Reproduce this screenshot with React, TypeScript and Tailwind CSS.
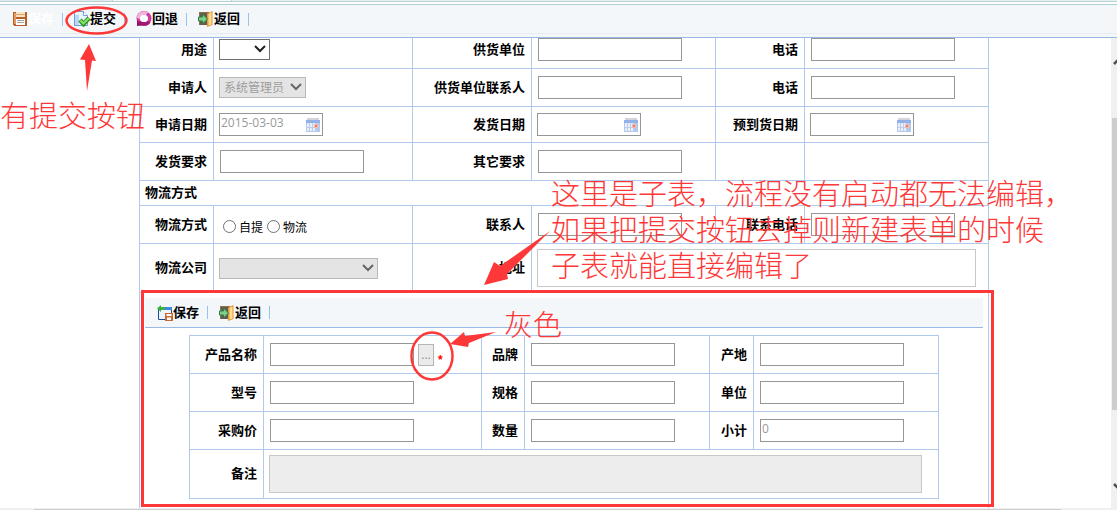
import type { ReactNode } from "react";
import clsx from "clsx";

// Purchase request form: outer request sheet, product sub-table below it,
// and the red review notes drawn over both.

const cellLine = "border-r border-b border-[#b1caeb]";
const boxStyle = "block border border-[#969696] bg-white px-px text-[12px] text-[#999999] outline-none";

function SaveIcon() {
  return (
    <svg className="h-4 w-4" viewBox="0 0 16 16">
      <path d="M1 1h14v14H2.5L1 13.5z" fill="#b5602a" />
      <path d="M2 2h2v11H2z" fill="#e39a5c" />
      <path d="M4 1h9v5H4z" fill="#f6e3c8" />
      <path d="M4 3h9v1H4z" fill="#e8a05c" />
      <path d="M4 8h9v6H4z" fill="#fff" />
      <path d="M5 9.5h7M5 11.5h7" stroke="#a8a29c" />
    </svg>
  );
}

function SubmitIcon() {
  return (
    <svg className="h-4 w-4" viewBox="0 0 16 16">
      <path d="M0.5 0.5h9l4 4v10h-13z" fill="#eaf4fe" stroke="#6f9fd8" />
      <path d="M9.5 0.5v4h4" fill="#fff" stroke="#6f9fd8" />
      <path d="M1 4h4v10H1z" fill="#b9d7f6" />
      <path d="M6 9l3.500 4L15 7" fill="none" stroke="#2f8f28" strokeWidth="4.500" />
      <path d="M6.400 9.400l3 3L14.600 7.400" fill="none" stroke="#7fe063" strokeWidth="2.200" />
    </svg>
  );
}

function RollbackIcon() {
  return (
    <svg className="h-4 w-4" viewBox="0 0 16 16">
      <circle cx="8" cy="7.500" r="7.500" fill="#cf3a9f" />
      <path d="M1 7a7 7 0 0 1 11-5.500L9 5 4 8z" fill="#f3b4dc" />
      <path d="M2 11a7 7 0 0 0 12.500 0L11 10H5z" fill="#a31873" />
      <path d="M6 4h4l2 2v3l-2 2H6L4 9V6z" fill="#fff" />
      <path d="M1 15V9l5 5.500z" fill="#8d1464" />
    </svg>
  );
}

function BackIcon() {
  return (
    <svg className="h-4 w-4" viewBox="0 0 16 16">
      <path d="M1 1h10v13H1z" fill="#8c7346" />
      <path d="M2 2h8v12H2z" fill="#655b50" />
      <path d="M9 2.500L14.500 0v14L9 16z" fill="#e09a35" />
      <path d="M10.500 3L13.500 1.500v12l-3 1z" fill="#ffdc94" />
      <path d="M0.500 6h4V3L9.500 8l-5 5v-3h-4z" fill="#7fce86" stroke="#2c7d48" />
    </svg>
  );
}

function SaveRowIcon() {
  return (
    <svg className="h-4 w-4" viewBox="0 0 16 16">
      <path d="M1.500 3.500h13v11h-13z" fill="#eef5ff" stroke="#1d4a94" />
      <path d="M5 2h10v3H5z" fill="#3c8be0" />
      <path d="M0 3.500L4 0v2h4v3H4v2z" fill="#3fae3c" />
      <path d="M8 8h8v8H8z" fill="#c46a33" />
      <path d="M9.500 9h5v2h-5zM10 12.500h4V15h-4z" fill="#fff" />
    </svg>
  );
}

function CalendarIcon() {
  return (
    <svg className="h-[14px] w-[14px]" viewBox="0 0 14 14">
      <path d="M0 2h14v12H0z" fill="#b3c9ec" />
      <path d="M1 0h12v2H1z" fill="#d2d6dc" />
      <path d="M0 2h14v3H0z" fill="#92b1e6" />
      <path d="M1 5h9v8H1z" fill="#e8effa" />
      <path d="M3.500 5v8M6.500 5v8M9.500 5v8M1 9.500h9" stroke="#b9cdec" />
      <path d="M8 6h4v4H8z" fill="#f5b9aa" />
      <path d="M9 7h2v2H9z" fill="#ec7f66" />
    </svg>
  );
}

function ToolButton({ icon, label, disabled }: { icon: ReactNode; label: string; disabled?: boolean }) {
  return (
    <div className="flex w-[62px] items-center justify-between">
      <button
        type="button"
        disabled={disabled}
        className={clsx(
          "flex items-center pl-[11px] text-[13px] leading-4 font-bold whitespace-nowrap",
          disabled ? "text-white" : "text-black",
        )}
      >
        {icon}
        <span className="pb-0.5">{label}</span>
      </button>
      <span className="h-[13px] w-px bg-[#99c2ee]" />
    </div>
  );
}

function LabelCell({ htmlFor, className, children }: { htmlFor?: string; className?: string; children?: ReactNode }) {
  return (
    <th className={clsx(cellLine, "pr-1.5 text-right text-[13px] leading-4 font-bold whitespace-nowrap", className)}>
      <label htmlFor={htmlFor} className="block pb-0.5">
        {children}
      </label>
    </th>
  );
}

function TextField({
  id,
  label,
  value,
  className,
}: {
  id: string;
  label: string;
  value?: string;
  className?: string;
}) {
  return (
    <>
      <LabelCell htmlFor={id} className={className}>
        {label}
      </LabelCell>
      <td className={clsx(cellLine, "pl-1.5", className)}>
        <input id={id} type="text" defaultValue={value} className={clsx(boxStyle, "h-[23px] w-36 pb-1 leading-4")} />
      </td>
    </>
  );
}

function DateField({ id, label, value }: { id: string; label: string; value?: string }) {
  return (
    <>
      <LabelCell htmlFor={id}>{label}</LabelCell>
      <td className={clsx(cellLine, "pl-[5px]")}>
        <div className="flex h-[23px] w-[104px] items-center border border-[#969696] pr-0.5">
          <input
            id={id}
            type="text"
            defaultValue={value}
            className="min-w-0 flex-1 px-px pb-1 text-[12px] leading-4 text-[#999999] outline-none"
          />
          <CalendarIcon />
        </div>
      </td>
    </>
  );
}

function SelectBox({
  id,
  option,
  width,
  disabled,
}: {
  id: string;
  option: string;
  width: string;
  disabled?: boolean;
}) {
  return (
    <div className={clsx("relative", width)}>
      <select
        id={id}
        disabled={disabled}
        className={clsx(
          "block h-[21px] w-full appearance-none border pl-1 text-[12px] leading-4 opacity-100",
          disabled ? "border-[#b9b9b9] bg-[#e4e4e4] text-[#9d9d9d]" : "border-[#707070] bg-white text-black",
        )}
      >
        <option>{option}</option>
      </select>
      <svg className="pointer-events-none absolute top-1.5 right-1 h-2 w-3" viewBox="0 0 12 8">
        <path d="M1 1l5 5 5-5" fill="none" stroke={disabled ? "#666666" : "#222222"} strokeWidth="2" />
      </svg>
    </div>
  );
}

function RadioOption({ label }: { label: string }) {
  return (
    <label className="flex items-center gap-[3px] text-[12px] leading-4">
      <input
        type="radio"
        name="shipping"
        className="h-[13px] w-[13px] appearance-none rounded-full border border-[#707070] bg-white"
      />
      <span className="pt-0.5">{label}</span>
    </label>
  );
}

function ProductTable() {
  return (
    <table className="mt-[7px] ml-[44px] w-[750px] table-fixed border-separate border-spacing-0 border-t border-l border-[#b1caeb]">
      <colgroup>
        <col className="w-[74px]" />
        <col className="w-[218px]" />
        <col className="w-[43px]" />
        <col className="w-[185px]" />
        <col className="w-[44px]" />
        <col className="w-[185px]" />
      </colgroup>
      <tbody>
        <tr className="h-[38px]">
          <LabelCell htmlFor="product">产品名称</LabelCell>
          <td className={clsx(cellLine, "pl-1.5")}>
            <div className="flex h-[23px] items-end gap-1">
              <input id="product" type="text" className={clsx(boxStyle, "h-[23px] w-36")} />
              <button
                type="button"
                disabled
                className="h-[22px] w-4 border border-[#b5b5b5] bg-[#ebebeb] text-[12px] leading-4 text-[#8c8c8c]"
              >
                ...
              </button>
              <span className="font-['Liberation_Sans',sans-serif] text-[12px] leading-3 font-bold text-[#ff0000]">*</span>
            </div>
          </td>
          <TextField id="brand" label="品牌" />
          <TextField id="origin" label="产地" />
        </tr>
        <tr className="h-[38px]">
          <TextField id="model" label="型号" />
          <TextField id="spec" label="规格" />
          <TextField id="unit" label="单位" />
        </tr>
        <tr className="h-[38px]">
          <TextField id="price" label="采购价" />
          <TextField id="quantity" label="数量" />
          <TextField id="subtotal" label="小计" value="0" />
        </tr>
        <tr className="h-[49px]">
          <LabelCell htmlFor="remark">备注</LabelCell>
          <td colSpan={5} className={clsx(cellLine, "pr-4 pl-[5px]")}>
            <textarea id="remark" disabled className="block h-[38px] w-full resize-none border border-[#c8c8c8] bg-[#ededed]" />
          </td>
        </tr>
      </tbody>
    </table>
  );
}

function RequestTable() {
  return (
    <table className="w-[850px] table-fixed border-separate border-spacing-0 border-l border-[#b1caeb]">
      <colgroup>
        <col className="w-[74px]" />
        <col className="w-[199px]" />
        <col className="w-[119px]" />
        <col className="w-[184px]" />
        <col className="w-[89px]" />
        <col className="w-[184px]" />
      </colgroup>
      <tbody>
        <tr className="h-[31px]">
          <LabelCell htmlFor="purpose" className="pb-[7px]">
            用途
          </LabelCell>
          <td className={clsx(cellLine, "pb-[7px] pl-[5px]")}>
            <SelectBox id="purpose" option="" width="w-[51px]" />
          </td>
          <TextField id="supplier" label="供货单位" className="pb-[7px]" />
          <TextField id="supplier-phone" label="电话" className="pb-[7px]" />
        </tr>
        <tr className="h-[38px]">
          <LabelCell htmlFor="applicant">申请人</LabelCell>
          <td className={clsx(cellLine, "pl-[5px]")}>
            <SelectBox id="applicant" option="系统管理员" width="w-[87px]" disabled />
          </td>
          <TextField id="supplier-contact" label="供货单位联系人" />
          <TextField id="contact-phone" label="电话" />
        </tr>
        <tr className="h-9">
          <DateField id="apply-date" label="申请日期" value="2015-03-03" />
          <DateField id="ship-date" label="发货日期" />
          <DateField id="arrival-date" label="预到货日期" />
        </tr>
        <tr className="h-[38px]">
          <TextField id="ship-note" label="发货要求" />
          <TextField id="other-note" label="其它要求" />
          <td className={cellLine} />
          <td className={cellLine} />
        </tr>
        <tr className="h-[25px]">
          <th colSpan={6} className={clsx(cellLine, "pb-0.5 pl-[5px] text-left text-[13px] leading-4 font-bold")}>
            物流方式
          </th>
        </tr>
        <tr className="h-[38px]">
          <LabelCell>物流方式</LabelCell>
          <td className={clsx(cellLine, "pt-1 pl-[9px]")}>
            <div className="flex gap-1">
              <RadioOption label="自提" />
              <RadioOption label="物流" />
            </div>
          </td>
          <TextField id="receiver" label="联系人" />
          <TextField id="receiver-phone" label="联系电话" />
        </tr>
        <tr className="h-[49px]">
          <LabelCell htmlFor="carrier">物流公司</LabelCell>
          <td className={clsx(cellLine, "pl-[5px]")}>
            <SelectBox id="carrier" option="" width="w-[159px]" disabled />
          </td>
          <LabelCell htmlFor="address">地址</LabelCell>
          <td colSpan={3} className={clsx(cellLine, "pr-3 pl-[5px]")}>
            <textarea id="address" className="block h-[38px] w-full resize-none border border-[#c8c8c8] bg-white" />
          </td>
        </tr>
        <tr>
          <td colSpan={6} className={clsx(cellLine, "relative h-[240px] px-[5px] pt-[5px] align-top")}>
            <div className="flex h-[30px] items-center border-b border-[#99b9e4] bg-[#f3f7fa] pl-px">
              <ToolButton icon={<SaveRowIcon />} label="保存" />
              <ToolButton icon={<BackIcon />} label="返回" />
            </div>
            <ProductTable />
            <div className="pointer-events-none absolute -top-[3px] left-px h-[217px] w-[853px] border-3 border-[#fe3838]" />
          </td>
        </tr>
      </tbody>
    </table>
  );
}

function Notes() {
  return (
    <div className="pointer-events-none absolute inset-0 text-[29px] leading-9 font-light whitespace-nowrap text-[#fe3838]">
      <svg className="absolute top-0 left-0 h-[510px] w-[1117px]" viewBox="0 0 1117 510">
        <g fill="none" stroke="#fe3838" strokeWidth="2.500">
          <ellipse cx="96.500" cy="20.500" rx="30" ry="13" />
          <ellipse cx="432" cy="356" rx="20.500" ry="23.500" />
        </g>
        <g fill="#fe3838">
          <path d="M89 44l7 17-4-.500L87 91l-2-31-5-.500z" />
          <path d="M484 285l10-23 6 4 50-35-43 43 1 5z" />
          <path d="M450 344l14-12 1 4 31-4-27 11-1 4z" />
        </g>
      </svg>
      <p className="absolute top-[98px] left-0">有提交按钮</p>
      <p className="absolute top-[176px] left-[551px]">
        这里是子表，流程没有启动都无法编辑，
        <br />
        如果把提交按钮去掉则新建表单的时候
        <br />
        子表就能直接编辑了
      </p>
      <p className="absolute top-[307px] left-[504px]">灰色</p>
    </div>
  );
}

export default function App() {
  return (
    <div className="relative flex h-screen flex-col overflow-hidden bg-white font-['Open_Sans','Noto_Sans_CJK_SC',sans-serif] text-black">
      <div className="flex h-0.5 shrink-0 border-b border-[#b9d0d1] bg-[#f2f7f9]">
        <span className="w-[113px] border-r border-[#b9d0d1] bg-[#dfebee]" />
        <span className="w-[118px]" />
        <span className="flex-1 border-l border-[#b9d0d1] bg-[#e6f0f3]" />
      </div>
      <header className="mt-0.5 flex h-[34px] shrink-0 flex-col border-t border-b border-t-[#b0cfd8] border-b-[#99b9e4] bg-[#f3f7fa]">
        <div className="flex h-[29px] items-center border-b border-[#e6edf0] pl-px">
          <ToolButton icon={<SaveIcon />} label="保存" disabled />
          <ToolButton icon={<SubmitIcon />} label="提交" />
          <ToolButton icon={<RollbackIcon />} label="回退" />
          <ToolButton icon={<BackIcon />} label="返回" />
        </div>
      </header>
      <div className="flex min-h-0 flex-1">
        <main className="flex min-w-0 flex-1 justify-center overflow-hidden pl-[17px]">
          <RequestTable />
        </main>
        <div className="flex w-1.5 flex-col justify-between overflow-hidden bg-[#f0f0f0] pt-5 pb-[18px] pl-px">
          <svg className="h-2 w-3 shrink-0" viewBox="0 0 12 8">
            <path d="M2 6l4-4 4 4" fill="none" stroke="#505050" strokeWidth="2.500" />
          </svg>
          <div className="mt-[52px] mb-[72px] flex-1 bg-[#cdcdcd]" />
          <svg className="h-2 w-3 shrink-0" viewBox="0 0 12 8">
            <path d="M2 2l4 4 4-4" fill="none" stroke="#505050" strokeWidth="2.500" />
          </svg>
        </div>
      </div>
      <div className="h-0.5 shrink-0 bg-[#f0f0f0] pt-px pr-14 pl-[34px]">
        <div className="h-px bg-[#cdcdcd]" />
      </div>
      <Notes />
    </div>
  );
}
